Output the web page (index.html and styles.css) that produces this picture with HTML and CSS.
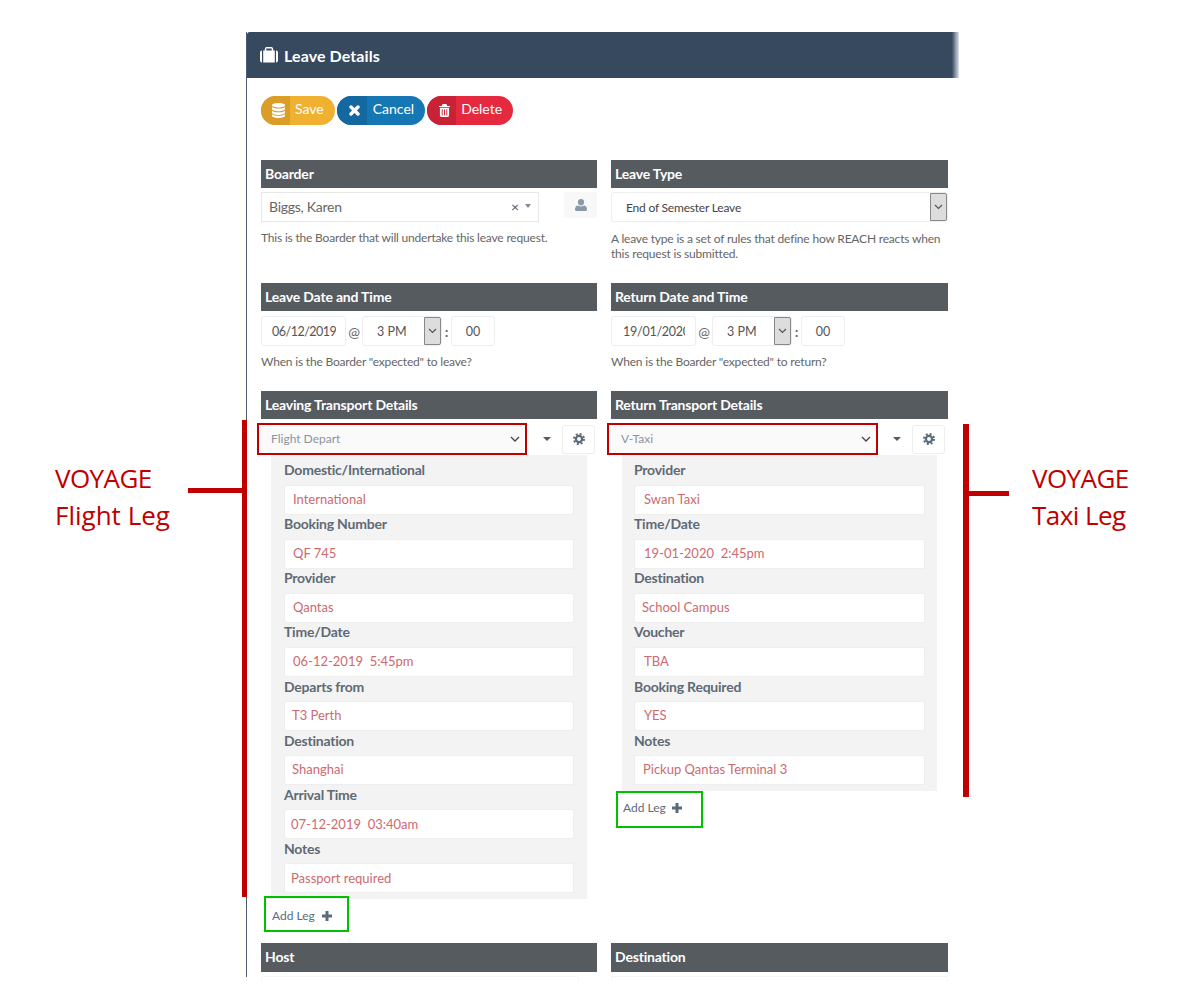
FILE: index.html
```html
<!DOCTYPE html>
<html lang="en">
<head>
    <meta charset="UTF-8">
    <title>Leave Details</title>
    <link rel="stylesheet" href="styles.css">
</head>

<body>
    <div class="page">
        <main class="panel">
            <header class="panel-head">
                <svg class="head-icon" width="18" height="16" viewBox="0 0 18 16"><path fill="#fff" d="M0 5.5a2 2 0 0 1 2-2v12a2 2 0 0 1-2-2zM3.2 3.5h1.6V2a2 2 0 0 1 2-2h4.4a2 2 0 0 1 2 2v1.5h1.600v12H3.200zM6.300 3.500h5.400V1.500H6.300zM16 3.500a2 2 0 0 1 2 2v8a2 2 0 0 1-2 2z"/></svg>
                <h1>Leave Details</h1>
            </header>

            <div class="actions">
                <a class="btn btn-save">
                    <span class="btn-icon">
                        <svg width="13" height="15" viewBox="0 0 14 16"><path fill="#fff" d="M7 0c3.900 0 7 1 7 2.400S10.900 4.800 7 4.800 0 3.800 0 2.400 3.100 0 7 0zM0 4.200c1.500 1.200 4.200 1.700 7 1.700s5.500-.5 7-1.700v2.200c0 1.300-3.100 2.400-7 2.400S0 7.700 0 6.400zM0 8.200c1.500 1.200 4.200 1.700 7 1.700s5.500-.5 7-1.700v2.200c0 1.300-3.100 2.400-7 2.400s-7-1.100-7-2.400zM0 12c1.500 1.200 4.200 1.700 7 1.700s5.500-.5 7-1.700v1.600c0 1.300-3.100 2.400-7 2.400s-7-1.100-7-2.400z"/></svg>
                    </span>
                    <span class="btn-label">Save</span>
                </a>
                <a class="btn btn-cancel">
                    <span class="btn-icon">
                        <svg width="11" height="11" viewBox="0 0 11 11"><path stroke="#fff" stroke-width="3.400" stroke-linecap="round" d="M2 2l7 7M9 2l-7 7"/></svg>
                    </span>
                    <span class="btn-label">Cancel</span>
                </a>
                <a class="btn btn-delete">
                    <span class="btn-icon">
                        <svg width="11" height="13" viewBox="0 0 12 14"><path fill="#fff" d="M4 0h4l1 2h3v1.300H0V2h3zM1 4h10v8.500A1.500 1.500 0 0 1 9.500 14h-7A1.500 1.500 0 0 1 1 12.500zM3 5.500v7h1v-7zM5.500 5.500v7h1v-7zM8 5.500v7h1v-7z" fill-rule="evenodd"/></svg>
                    </span>
                    <span class="btn-label">Delete</span>
                </a>
            </div>

            <!-- Boarder / leave type -->
            <section class="row row-first">
                <div class="col">
                    <h2 class="sec-head">Boarder</h2>
                    <div class="boarder-line">
                        <div class="combo">
                            <span class="combo-text">Biggs, Karen</span>
                            <span class="combo-clear">×</span>
                            <span class="caret caret-small"></span>
                        </div>
                        <span class="user-btn">
                            <svg width="12" height="12" viewBox="0 0 12 12"><path fill="#8a99a8" d="M6 0a3 3 0 0 1 3 3.200A3 3 0 0 1 6 6.400a3 3 0 0 1-3-3.200A3 3 0 0 1 6 0zM3.200 6.500C4 7.200 5 7.500 6 7.500s2-.3 2.800-1C10.500 6.700 12 8 12 10v.5c0 .9-.7 1.500-1.500 1.500h-9C.7 12 0 11.400 0 10.500V10c0-2 1.500-3.300 3.200-3.500z"/></svg>
                        </span>
                    </div>
                    <p class="help">This is the Boarder that will undertake this leave request.</p>
                </div>
                <div class="col">
                    <h2 class="sec-head">Leave Type</h2>
                    <div class="box select-box type-select">
                        <span class="select-text">End of Semester Leave</span>
                        <span class="arrow-btn"><svg width="9" height="6" viewBox="0 0 9 6"><path fill="none" stroke="#555" stroke-width="1.200" d="M1 1l3.500 3.500L8 1"/></svg></span>
                    </div>
                    <p class="help help-low">A leave type is a set of rules that define how REACH reacts when this request is submitted.</p>
                </div>
            </section>

            <!-- Dates -->
            <section class="row">
                <div class="col">
                    <h2 class="sec-head head-gap">Leave Date and Time</h2>
                    <div class="date-line">
                        <span class="box date-box"><span class="date-text">06/12/2019</span></span>
                        <span class="sep sep-at">@</span>
                        <span class="box select-box hour-box">
                            <span class="hour-text">3 PM</span>
                            <span class="arrow-btn"><svg width="9" height="6" viewBox="0 0 9 6"><path fill="none" stroke="#555" stroke-width="1.200" d="M1 1l3.500 3.500L8 1"/></svg></span>
                        </span>
                        <span class="sep sep-colon">:</span>
                        <span class="box min-box">00</span>
                    </div>
                    <p class="help">When is the Boarder "expected" to leave?</p>
                </div>
                <div class="col">
                    <h2 class="sec-head head-gap">Return Date and Time</h2>
                    <div class="date-line">
                        <span class="box date-box date-box-late"><span class="date-text">19/01/2020</span></span>
                        <span class="sep sep-at">@</span>
                        <span class="box select-box hour-box">
                            <span class="hour-text">3 PM</span>
                            <span class="arrow-btn"><svg width="9" height="6" viewBox="0 0 9 6"><path fill="none" stroke="#555" stroke-width="1.200" d="M1 1l3.500 3.500L8 1"/></svg></span>
                        </span>
                        <span class="sep sep-colon">:</span>
                        <span class="box min-box">00</span>
                    </div>
                    <p class="help">When is the Boarder "expected" to return?</p>
                </div>
            </section>

            <!-- Transport -->
            <section class="row row-transport">
                <div class="col col-leaving">
                    <h2 class="sec-head">Leaving Transport Details</h2>
                    <div class="leg-bar">
                        <div class="leg-select">
                            <span>Flight Depart</span>
                            <svg width="10" height="6" viewBox="0 0 10 6"><path fill="none" stroke="#444" stroke-width="1.300" d="M1 1l4 4 4-4"/></svg>
                        </div>
                        <span class="caret"></span>
                        <span class="gear-btn">
                            <svg width="12" height="12" viewBox="0 0 12 12"><circle cx="6" cy="6" r="3.100" fill="none" stroke="#5b6b7c" stroke-width="2.300"/><circle cx="6" cy="6" r="5" fill="none" stroke="#5b6b7c" stroke-width="2" stroke-dasharray="2 1.930"/></svg>
                        </span>
                    </div>
                    <div class="leg">
                        <div class="field"><label>Domestic/International</label><div class="value">International</div></div>
                        <div class="field"><label>Booking Number</label><div class="value">QF 745</div></div>
                        <div class="field"><label>Provider</label><div class="value">Qantas</div></div>
                        <div class="field"><label>Time/Date</label><div class="value">06-12-2019&nbsp; 5:45pm</div></div>
                        <div class="field"><label>Departs from</label><div class="value nudge-1">T3 Perth</div></div>
                        <div class="field"><label>Destination</label><div class="value nudge-1">Shanghai</div></div>
                        <div class="field"><label>Arrival Time</label><div class="value nudge-2">07-12-2019&nbsp; 03:40am</div></div>
                        <div class="field"><label>Notes</label><div class="value nudge-2">Passport required</div></div>
                    </div>
                    <a class="add-leg">Add Leg
                        <svg width="10" height="10" viewBox="0 0 10 10"><path stroke="#5b6b7c" stroke-width="3" d="M5 0v10M0 5h10"/></svg>
                    </a>
                </div>
                <div class="col col-return">
                    <h2 class="sec-head">Return Transport Details</h2>
                    <div class="leg-bar">
                        <div class="leg-select">
                            <span>V-Taxi</span>
                            <svg width="10" height="6" viewBox="0 0 10 6"><path fill="none" stroke="#444" stroke-width="1.300" d="M1 1l4 4 4-4"/></svg>
                        </div>
                        <span class="caret"></span>
                        <span class="gear-btn">
                            <svg width="12" height="12" viewBox="0 0 12 12"><circle cx="6" cy="6" r="3.100" fill="none" stroke="#5b6b7c" stroke-width="2.300"/><circle cx="6" cy="6" r="5" fill="none" stroke="#5b6b7c" stroke-width="2" stroke-dasharray="2 1.930"/></svg>
                        </span>
                    </div>
                    <div class="leg">
                        <div class="field"><label>Provider</label><div class="value">Swan Taxi</div></div>
                        <div class="field"><label>Time/Date</label><div class="value">19-01-2020&nbsp; 2:45pm</div></div>
                        <div class="field"><label>Destination</label><div class="value nudge-2">School Campus</div></div>
                        <div class="field"><label>Voucher</label><div class="value">TBA</div></div>
                        <div class="field"><label>Booking Required</label><div class="value">YES</div></div>
                        <div class="field"><label>Notes</label><div class="value nudge-1">Pickup Qantas Terminal 3</div></div>
                    </div>
                    <a class="add-leg">Add Leg
                        <svg width="10" height="10" viewBox="0 0 10 10"><path stroke="#5b6b7c" stroke-width="3" d="M5 0v10M0 5h10"/></svg>
                    </a>
                </div>
            </section>

            <section class="row row-last">
                <div class="col"><h2 class="sec-head">Host</h2><div class="cut-field cut-host"></div></div>
                <div class="col"><h2 class="sec-head">Destination</h2><div class="cut-field"></div></div>
            </section>
        </main>

        <!-- Annotations laid over the screenshot -->
        <div class="note note-flight"><span class="note-tight">VOYAGE</span><br>Flight Leg</div>
        <div class="bar bar-flight"></div>
        <div class="stub stub-flight"></div>
        <div class="note note-taxi note-tight">VOYAGE<br>Taxi Leg</div>
        <div class="bar bar-taxi"></div>
        <div class="stub stub-taxi"></div>
    </div>
</body>
</html>
```

FILE: styles.css
```css
body {
    margin: 0;
    background-color: #fff;
    font-family: "Lato", "Open Sans", sans-serif;
    color: #666;
}

.page {
    position: relative;
    height: 1000px;
    overflow: hidden;
}

.panel {
    width: 713px;
    height: 945px;
    margin: 32px 0 0 246px;
    border-left: 1px solid #4a5d72;
    box-sizing: border-box;
}

.panel-head {
    display: flex;
    align-items: center;
    gap: 6px;
    height: 46px;
    padding-left: 13px;
    color: #fff;
    background: linear-gradient(to right, #36495e 99%, #dfe3e7);
    border-radius: 3px 0 0 0;
}

.panel-head h1 {
    margin: 0;
    font-size: 16px;
    font-weight: 700;
    letter-spacing: 0.1px;
}

.actions {
    display: flex;
    gap: 2px;
    margin: 18px 0 0 14px;
}

.btn {
    display: flex;
    height: 29px;
    color: #fff;
    font-size: 14px;
    line-height: 26px;
    border-radius: 15px;
    overflow: hidden;
}

.btn-icon {
    display: flex;
    align-items: center;
    justify-content: center;
    width: 29px;
    padding-left: 6px;
    box-sizing: border-box;
}

.btn-cancel .btn-icon {
    width: 30px;
}

.btn-label {
    padding: 0 11px 0 5px;
}

.btn-cancel .btn-label {
    padding: 0 11px 0 6px;
}

.btn-save { background-color: #f0b030; }
.btn-save .btn-icon { background-color: #d99d28; }
.btn-cancel { background-color: #1578b5; }
.btn-cancel .btn-icon { background-color: #12689f; }
.btn-delete { background-color: #e52a40; }
.btn-delete .btn-icon { background-color: #c92236; }

.row {
    display: grid;
    grid-template-columns: 336px 337px;
    column-gap: 14px;
    padding-left: 14px;
    margin-bottom: 22px;
}

.row-first {
    margin-top: 35px;
}

.row-transport {
    margin-bottom: 11px;
}

.row-last {
    margin-bottom: 0;
}

.sec-head {
    margin: 0 0 4px;
    height: 28px;
    padding-left: 4px;
    color: #fff;
    background-color: #565b60;
    font-size: 14px;
    font-weight: 700;
    line-height: 28px;
    letter-spacing: -0.18px;
}

.head-gap {
    margin-bottom: 5px;
}

.row-last .sec-head {
    height: 29px;
}

.cut-field {
    height: 5px;
    box-sizing: border-box;
    border: 1px solid #f6f6f6;
    border-bottom: 0;
}

.cut-host {
    width: 318px;
}

.help {
    margin: 8px 0 0;
    font-size: 12px;
    line-height: 15px;
    letter-spacing: -0.19px;
    color: #666;
}

.help-low {
    margin-top: 9px;
}

.box {
    display: flex;
    align-items: center;
    height: 30px;
    box-sizing: border-box;
    background-color: #fff;
    border: 1px solid #eee;
    border-radius: 3px;
    font-size: 12.5px;
    color: #555;
}

/* boarder picker */
.boarder-line {
    display: flex;
    justify-content: space-between;
    align-items: flex-start;
}

.combo {
    display: flex;
    align-items: center;
    width: 278px;
    height: 30px;
    padding: 0 7px 2px;
    box-sizing: border-box;
    border: 1px solid #e8e8e8;
    font-size: 14px;
}

.combo-text {
    flex: 1;
    letter-spacing: -0.25px;
}

.combo-clear {
    margin-right: 6px;
    font-size: 14px;
    color: #555;
}

.user-btn {
    display: flex;
    align-items: center;
    justify-content: center;
    width: 33px;
    height: 26px;
    background-color: #f8f8f8;
    border-radius: 3px;
}

.caret {
    display: inline-block;
    width: 0;
    height: 0;
    border-left: 4px solid transparent;
    border-right: 4px solid transparent;
    border-top: 4px solid #4d5b69;
}

.caret-small {
    border-left-width: 3px;
    border-right-width: 3px;
    border-top-color: #888;
}

/* plain browser style selects */
.select-box {
    justify-content: space-between;
    padding-right: 0;
}

.type-select {
    width: 337px;
}

.select-text {
    padding-left: 14px;
    font-size: 12px;
    letter-spacing: -0.2px;
    color: #444;
}

.arrow-btn {
    display: flex;
    align-items: center;
    justify-content: center;
    align-self: stretch;
    width: 17px;
    box-sizing: border-box;
    background-color: #ddd;
    border: 1px solid #888;
    border-radius: 0 2px 2px 0;
}

.date-line {
    display: flex;
    align-items: center;
}

.date-box {
    width: 85px;
    padding: 0 9px 0 10px;
    letter-spacing: -0.5px;
}

/* the year is cut by the narrow input, as in the real form */
.date-box-late {
    padding: 0 10px 0 11px;
    letter-spacing: -0.25px;
}

.date-text {
    display: block;
    overflow: hidden;
    white-space: nowrap;
}

.sep {
    font-size: 14px;
    text-align: center;
}

.sep-at {
    width: 16px;
}

.sep-colon {
    width: 9px;
    font-weight: 700;
}

.hour-box {
    width: 80px;
}

.hour-text {
    padding-left: 14px;
}

.min-box {
    width: 44px;
    justify-content: center;
}

/* transport legs */
.leg-bar {
    display: flex;
    align-items: center;
    height: 32px;
    margin-left: -4px;
}

.leg-select {
    display: flex;
    align-items: center;
    justify-content: space-between;
    width: 270px;
    height: 32px;
    padding: 0 5px 2px 12px;
    box-sizing: border-box;
    background-color: #fafafa;
    border: 2px solid #c00000;
    font-size: 12px;
    color: #8a949e;
}

.leg-select svg {
    margin-top: 2px;
}

.col-return .leg-select {
    width: 271px;
}

.leg-bar .caret {
    margin-left: 16px;
}

.col-return .leg-bar .caret {
    margin-left: 15px;
}

.gear-btn {
    display: flex;
    align-items: center;
    justify-content: center;
    width: 33px;
    height: 29px;
    margin-left: 11px;
    border: 1px solid #eee;
    border-radius: 3px;
    box-sizing: border-box;
}

.leg {
    width: 316px;
    margin-left: 10px;
    padding: 6px 13px 6px;
    box-sizing: border-box;
    background-color: #f3f3f3;
}

.field label {
    display: block;
    height: 24px;
    box-sizing: border-box;
    font-size: 14px;
    font-weight: 700;
    line-height: 18px;
    letter-spacing: -0.23px;
    color: #5f6a75;
}

.field:nth-child(n+5) label {
    padding-top: 1px;
}

.value {
    height: 30px;
    padding-left: 8px;
    box-sizing: border-box;
    background-color: #fff;
    border: 1px solid #eee;
    border-radius: 2px;
    font-size: 13px;
    line-height: 26px;
    color: #cc6a70;
}

.col-leaving .field:nth-child(n+7) .value {
    line-height: 28px;
}

.nudge-1 { padding-left: 7px; }
.nudge-2 { padding-left: 6px; }

.col-return .leg {
    width: 315px;
    margin-left: 11px;
    padding: 6px 12px 6px;
}

.col-return .value { padding-left: 9px; }
.col-return .nudge-1 { padding-left: 8px; }
.col-return .nudge-2 { padding-left: 7px; }

.add-leg {
    display: flex;
    align-items: flex-start;
    gap: 7px;
    width: 85px;
    height: 36px;
    margin: -3px 0 0 3px;
    padding: 10px 0 0 6px;
    box-sizing: border-box;
    border: 2px solid #00c000;
    font-size: 12px;
    color: #5b6b7c;
    position: relative;
}

.add-leg svg {
    margin-top: 3px;
}

.col-return .add-leg {
    gap: 6px;
    width: 87px;
    height: 37px;
    margin: 0 0 0 5px;
    padding: 7px 0 0 5px;
}

/* annotations */
.note {
    position: absolute;
    font-family: "Open Sans", sans-serif;
    font-size: 26px;
    line-height: 37px;
    color: #c00000;
}

.note-tight { letter-spacing: -0.55px; }
.note-flight { left: 55px; top: 460px; }
.note-taxi { left: 1032px; top: 460px; }

.bar,
.stub {
    position: absolute;
    background-color: #c00000;
}

.bar-flight { left: 242px; top: 420px; width: 5px; height: 477px; }
.stub-flight { left: 188px; top: 488px; width: 54px; height: 5px; }
.bar-taxi { left: 963px; top: 424px; width: 6px; height: 373px; }
.stub-taxi { left: 969px; top: 491px; width: 40px; height: 5px; }
```
